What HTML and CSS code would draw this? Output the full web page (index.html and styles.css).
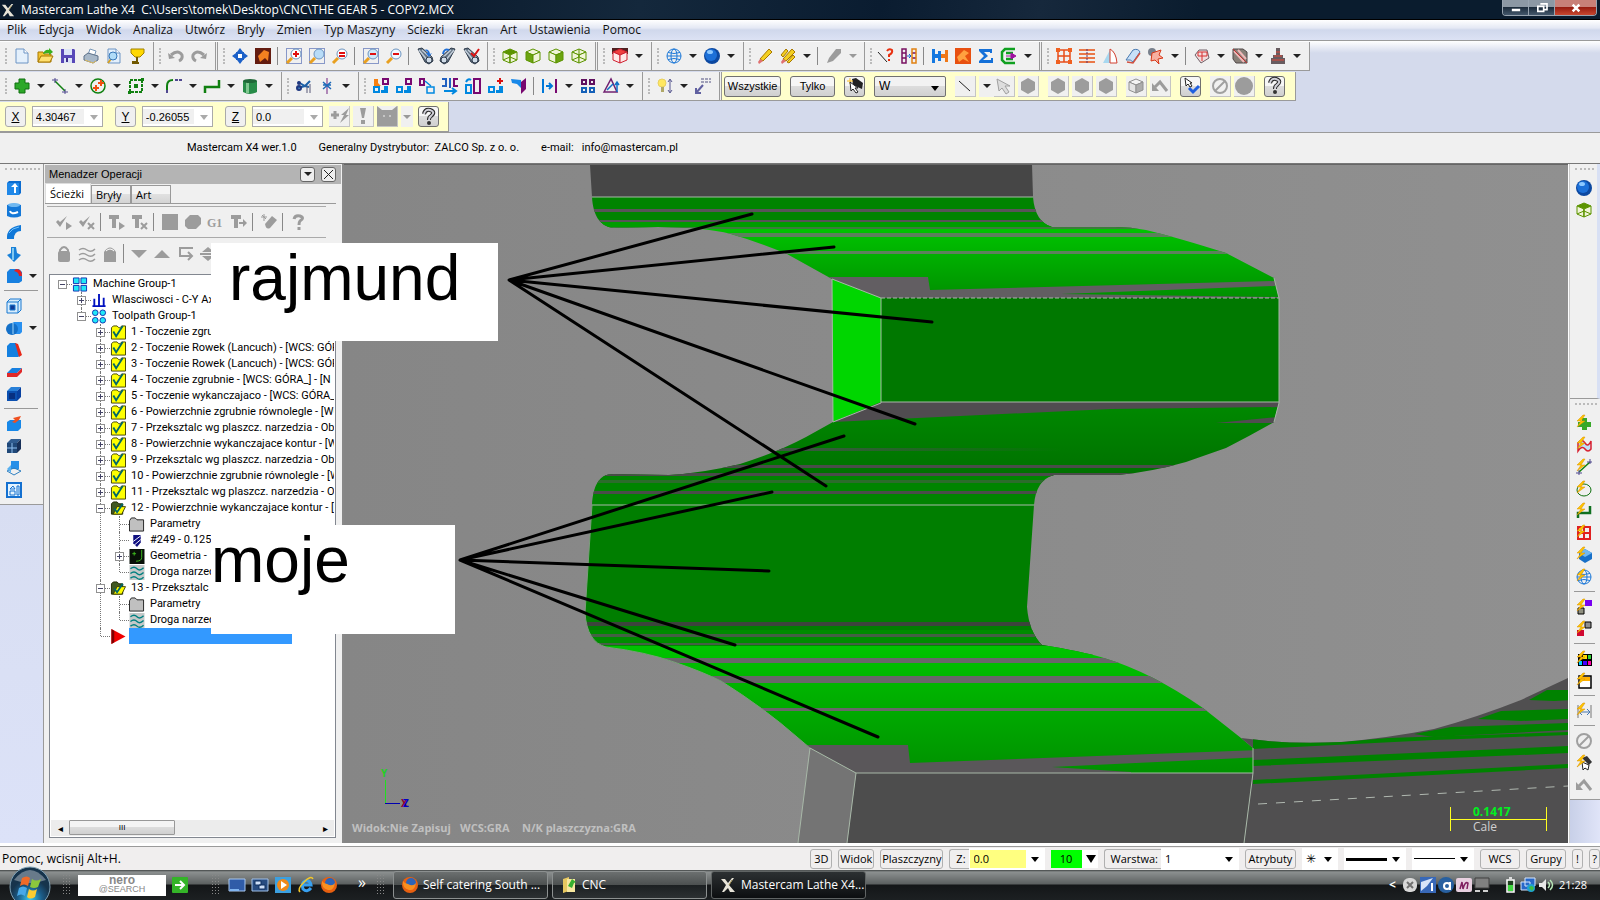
FILE: index.html
```
<!DOCTYPE html>
<html lang="pl">
<head>
  <meta charset="UTF-8" />
  <meta name="viewport" content="width=device-width, initial-scale=1.0"/>
  <title>Mastercam Lathe X4</title>
  <link rel="stylesheet" href="styles.css">
</head>
<body>

  <!-- Title bar -->
  <header class="titlebar">
    <span data-icon="app"></span>
    <h1>Mastercam Lathe X4&nbsp; C:\Users\tomek\Desktop\CNC\THE GEAR 5 - COPY2.MCX</h1>
    <div class="window-buttons">
      <button aria-label="Minimalizuj"><svg viewBox="0 0 16 12"><path d="M3 7h10v3H3z" fill="#fff"/></svg></button>
      <button aria-label="Przywroc"><svg viewBox="0 0 16 12"><path d="M6 1h8v7h-3M3 4h7v6H3z" fill="none" stroke="#fff" stroke-width="2"/></svg></button>
      <button class="close" aria-label="Zamknij"><svg viewBox="0 0 16 12"><path d="M4 2l8 8M12 2l-8 8" stroke="#fff" stroke-width="3"/></svg></button>
    </div>
  </header>

  <nav class="menu">
    <a href="#">Plik</a>
    <a href="#">Edycja</a>
    <a href="#">Widok</a>
    <a href="#">Analiza</a>
    <a href="#">Utwórz</a>
    <a href="#">Bryly</a>
    <a href="#">Zmien</a>
    <a href="#">Typ Maszyny</a>
    <a href="#">Sciezki</a>
    <a href="#">Ekran</a>
    <a href="#">Art</a>
    <a href="#">Ustawienia</a>
    <a href="#">Pomoc</a>
  </nav>

  <!-- Toolbars -->
  <div class="toolbars">
    <div class="toolbar">
      <div class="group" data-icons="new open save print preview trophy"></div>
      <div class="group double" data-icons="undo redo"></div>
      <div class="group" data-icons="pan fit | zoomwin zoombox zoomeq | unzoom zoomout | view1 view2 view3"></div>
      <div class="group double" data-icons="cubeTop cubeLeft cubeRight cubeWire"></div>
      <div class="group" data-icons="cubeRed v"></div>
      <div class="group" data-icons="globe v sphere v"></div>
      <div class="group tight" data-icons="pencil pencils v | pencilOff v-"></div>
      <div class="group double tight" data-icons="ask columns | plug orange sigma green v"></div>
      <div class="group" data-icons="gridRed linesRed fan tube flower v | net v slab v drill v"></div>
    </div>
    <div class="toolbar">
      <div class="group" data-icons="plus v line v circle v rect v fillet v spline v cylinder v"></div>
      <div class="group" data-icons="scissors trim v"></div>
      <div class="group" data-icons="xf1 xf2 xf3 xf4 xf5 xf6 xf7 | xf8 v squares triangle v"></div>
      <div class="group double" data-icons="bulb v dimension"></div>
      <div class="ribbon">
        <button class="push all">Wszystkie</button>
        <button class="push only">Tylko</button>
        <button class="push square" aria-label="Wybor" data-icon="pick"></button>
        <span class="combo mode"><select aria-label="Tryb"><option>W</option></select></span>
        <div class="flat-set" data-icons="thin v arrowOff hexOff"></div>
        <div class="flat-set" data-icons="hexOff hexOff hexOff"></div>
        <div class="flat-set" data-icons="cubeOff backOff"></div>
        <button class="push square" aria-label="Zatwierdz" data-icon="pickOk"></button>
        <div class="flat-set" data-icons="noOff discOff"></div>
        <button class="push square" aria-label="Pomoc" data-icon="help"></button>
      </div>
    </div>
    <div class="toolbar last">
      <div class="ribbon coords">
        <button class="push square" aria-label="X"><u>X</u></button>
        <span class="combo off"><input type="text" aria-label="X" value="4.30467"></span>
        <button class="push square" aria-label="Y"><u>Y</u></button>
        <span class="combo off"><input type="text" aria-label="Y" value="-0.26055"></span>
        <button class="push square" aria-label="Z"><u>Z</u></button>
        <span class="combo off"><input type="text" aria-label="Z" value="0.0"></span>
        <div class="flat-set" data-icons="fastOff bangOff maskOff v-"></div>
        <button class="push square" aria-label="Pomoc" data-icon="help"></button>
      </div>
    </div>
  </div>

  <div class="info">
    <span>Mastercam X4 wer.1.0</span>
    <span>Generalny Dystrybutor:&nbsp; ZALCO Sp. z o. o.</span>
    <span>e-mail:&nbsp;&nbsp; info@mastercam.pl</span>
  </div>

  <!-- Workspace -->
  <main class="workspace">
    <aside class="strip left">
      <div class="strip-tools" data-icons="extrude revolve sweep loft filletSolid v | shell boolean v draft trimSolid solidBlock | solidEdit solidGrid solidArrow layout"></div>
    </aside>

    <section class="manager">
      <div class="manager-head">
        <h2>Menadzer Operacji</h2>
        <button aria-label="Menu"><i class="caret"></i></button>
        <button aria-label="Zamknij"><svg class="cross" viewBox="0 0 9 9"><path d="M0 0l9 9M9 0L0 9" stroke="#222"/></svg></button>
      </div>
      <div class="tabs">
        <button class="tab active">Ścieżki</button>
        <button class="tab">Bryły</button>
        <button class="tab">Art</button>
      </div>
      <div class="manager-tools" data-icons="checkPlay checkX | toolPlay toolX | squareOff blobOff g1 toolGo | brushOff | helpOff"></div>
      <div class="manager-tools plain" data-icons="lockOff wavesOff ghostOff | downOff upOff loopOff splitOff"></div>
      <div class="tree-box">
        <ul class="tree" id="tree"></ul>
        <div class="scroll">
          <button aria-label="W lewo">◂</button>
          <div class="track"><div class="thumb">III</div></div>
          <button aria-label="W prawo">▸</button>
        </div>
      </div>
    </section>

    <section class="viewport">
      <svg viewBox="343 165 1226 678" preserveAspectRatio="xMinYMin slice">
        <defs>
          <linearGradient id="bg" x1="0" x2="1"><stop offset="0" stop-color="#868686"/><stop offset="1" stop-color="#909090"/></linearGradient>
          <linearGradient id="upper" x1="0" y1="0" x2="0" y2="1"><stop offset="0" stop-color="#00c400"/><stop offset="1" stop-color="#009000"/></linearGradient>
          <linearGradient id="lower" x1="0" y1="0" x2="0" y2="1"><stop offset="0" stop-color="#008a00"/><stop offset="1" stop-color="#007000"/></linearGradient>
          <linearGradient id="fade"><stop offset="0" stop-color="#44504a"/><stop offset="1" stop-color="#007a00"/></linearGradient>
          <clipPath id="topTooth"><path d="M591 197C592 214 598 226 612 228L657 227Q702 227 730 234Q760 243 786 254L831 279L880 298H1278L1273 278L1225 253Q1178 238 1145 230Q1130 227 1114 227H1051Q1034 222 1032 197Z"/></clipPath>
          <clipPath id="midTooth"><path d="M880 402H1278L1273 422Q1250 435 1225 448L1185 462Q1150 472 1117 475H1053Q1035 480 1033 505H591C592 486 598 474 612 474L668 475Q702 473 739 464Q775 453 805 437L832 422Z"/></clipPath>
          <clipPath id="lowTooth"><path d="M591 505L584 613Q586 642 605 647Q645 652 673 662Q702 672 720 681Q763 708 796 737L809 748L855 773H1252V748L1240 738L1202 708Q1150 672 1103 658Q1080 651 1041 645Q1028 632 1026 607L1033 505Z"/></clipPath>
          <clipPath id="farTooth"><path d="M1240 738L1267 741Q1300 744 1340 742Q1387 738 1433 729Q1477 717 1520 700L1569 677V843H1243L1252 773V748Z"/></clipPath>
        </defs>
        <rect x="343" y="165" width="1226" height="678" fill="url(#bg)"/>

        <!-- top tooth -->
        <path d="M589 165H1031L1032 197H591Z" fill="#464646"/>
        <g clip-path="url(#topTooth)">
          <path d="M580 197h710v31H580z" fill="#008400"/>
          <path d="M580 222h710v5H580z" fill="#009c00"/>
          <path d="M580 228h710v70H580z" fill="url(#upper)"/>
          <path d="M580 209h710v3H580zM580 220h710v2H580z" fill="#585458"/>
          <path d="M580 227h710v2H580z" fill="#3c7c3c"/>
          <path d="M580 233h710v4H580zM580 251h710v3H580z" fill="#5c805c"/>
          <path d="M820 277H927L929 290L1274 281V286L1060 294L1280 297V300H820Z" fill="#625e62"/>
        </g>
        <path d="M831 279L880 298V403L832 422Z" fill="#00d600"/>
        <path d="M880 298H1278V403H880Z" fill="#007800"/>
        <g clip-path="url(#midTooth)">
          <path d="M580 402h710v75H580z" fill="url(#lower)"/>
          <path d="M580 475h710v30H580z" fill="#008400"/>
          <path d="M832 402H1280V407L1110 409L832 422Z" fill="#504c50"/>
          <path d="M1215 423L1277 417V423Z" fill="#504c50"/>
          <path d="M760 448h300v3H760z" fill="url(#fade)"/>
          <path d="M580 465h710v3H580zM580 473h710v3H580zM580 491h710v3H580z" fill="#4a4c4a"/>
          <path d="M580 480h710v3H580z" fill="#2c6c2c"/>
        </g>
        <g clip-path="url(#lowTooth)">
          <path d="M580 505h710v150H580z" fill="#007e00"/>
          <path d="M580 630h710v16H580z" fill="#008c00"/>
          <path d="M580 646h710v130H580z" fill="url(#upper)"/>
          <path d="M580 622h710v4H580z" fill="#3c443c"/>
          <path d="M580 634h710v3H580zM580 643h710v2H580z" fill="#456045"/>
          <path d="M580 658h710v5H580zM580 676h710v7H580zM580 708h710v3H580z" fill="#696669"/>
          <path d="M800 745H907L909 763L1260 750V757L1051 767L1130 772V776H800Z" fill="#5a575a"/>
        </g>
        <path d="M855 773H1252L1243 843H846Z" fill="#4d4d4d"/>
        <path d="M809 748L855 773L846 843H797Z" fill="#747474"/>

        <!-- next tooth on the right -->
        <g clip-path="url(#farTooth)">
          <path d="M1240 670H1569V843H1240Z" fill="#504f50"/>
          <g fill="#008200">
            <path d="M1252 738L1340 742L1387 738L1569 732V735L1433 740L1252 749Z"/>
            <path d="M1528 700L1546 690H1569V700L1553 701Z"/>
            <path d="M1477 719L1500 711L1569 709V719L1520 721Z"/>
            <path d="M1413 734L1450 727L1569 723V730L1433 737Z"/>
            <path d="M1252 760L1569 746V753L1252 766ZM1252 780L1569 764V768L1252 784Z"/>
          </g>
          <path d="M1257 804L1567 786" stroke="#b0b8b0" stroke-dasharray="9 9"/>
        </g>

        <!-- edges -->
        <g fill="none" stroke="#a8b8a8">
          <path d="M591 197H1032M880 402H1278M591 505H1033M855 773H1252"/>
          <path d="M880 298H1278" stroke-dasharray="4 2"/>
          <path d="M831 279L880 298V403L832 422ZM1273 278L1278 298V403L1273 422"/>
          <path d="M797 843L809 748L855 773L846 843M1252 748V773L1243 843"/>
          <path d="M591 505L584 613Q586 642 605 647Q645 652 673 662Q702 672 720 681Q763 708 796 737L809 748" stroke="#7c9c7c"/>
        </g>

        <g fill="none" stroke="#000" stroke-width="3" stroke-linecap="round">
          <path d="M751 214L508 280L833 247M931 322L508 280L914 424M508 280L825 486"/>
          <path d="M843 436L459 560L771 492M768 571L459 560L734 645M459 560L877 737"/>
        </g>

        <!-- axes, view names and scale -->
        <path d="M384.500 780V803" stroke="#20e020"/>
        <path d="M384 803.500H399" stroke="#0000b0"/>
        <text class="axis" x="380" y="777" fill="#20d020">Y</text>
        <text class="axis" x="400" y="807" fill="#8c0020">X</text>
        <text class="axis" x="402" y="807" fill="#0000c8">Z</text>
        <g class="view-names">
          <text x="351" y="832">Widok:Nie Zapisuj</text>
          <text x="459" y="832">WCS:GRA</text>
          <text x="521" y="832">N/K plaszczyzna:GRA</text>
        </g>
        <path d="M1449.500 807V831M1545.500 807V831M1449 819.500H1546" stroke="#ffff20"/>
        <text class="scale" x="1472" y="816">0.1417</text>
        <text class="scale unit" x="1472" y="831">Cale</text>
      </svg>
    </section>

    <aside class="strip right">
      <div class="strip-tools tall" data-icons="sphere cubeTop"></div>
      <div class="strip-tools" data-icons="qPlus qSurf qLine qCircle qSpline qGrid qCube qGlobe | qViolet qRed | qColors qWindow | qDim | noOff qPick backOff"></div>
    </aside>

    <!-- notes laid over the screen -->
    <div class="note rajmund">rajmund</div>
    <div class="note moje">moje</div>
  </main>

  <!-- Status bar -->
  <div class="status">
    <span class="hint">Pomoc, wcisnij Alt+H.</span>
    <button class="b3d">3D</button>
    <button class="bview">Widok</button>
    <button class="bplane">Plaszczyzny</button>
    <div class="field">
      <label for="z">Z:</label>
      <span class="combo depth"><input type="text" id="z" value="0.0"></span>
    </div>
    <div class="field color">
      <button class="ten">10</button><i class="caret big"></i>
    </div>
    <div class="field">
      <label for="layer">Warstwa:</label>
      <span class="combo layer"><select id="layer"><option>1</option></select></span>
    </div>
    <button class="battr">Atrybuty</button>
    <span class="combo point"><select aria-label="Punkt"><option>✳</option></select></span>
    <span class="combo stroke thick"><select aria-label="Grubosc"><option></option></select></span>
    <span class="combo stroke"><select aria-label="Linia"><option></option></select></span>
    <button class="bwcs">WCS</button>
    <button class="bwcs">Grupy</button>
    <button class="bmark">!</button>
    <button class="bmark">?</button>
  </div>

  <!-- Taskbar -->
  <footer class="taskbar">
    <button class="start" aria-label="Start">
      <svg viewBox="0 0 42 42">
        <defs><radialGradient id="orb" cy="0.8"><stop offset="0" stop-color="#38c8f0"/><stop offset="0.6" stop-color="#1c5c88"/><stop offset="1" stop-color="#17344c"/></radialGradient></defs>
        <circle cx="21" cy="21" r="20" fill="url(#orb)" stroke="#7fa0b4"/>
        <path d="M5 14Q21 -6 37 14Q21 20 5 14Z" fill="#fff" opacity=".35"/>
        <path d="M13 12q5-3 8 0l-2 8q-4-3-8 0z" fill="#f06a28"/>
        <path d="M23 13q4 3 9 0l-3 8q-4 2-8 0z" fill="#8cc83c"/>
        <path d="M10 22q4-3 8 0l-2 8q-4-3-8 0z" fill="#48a8e8"/>
        <path d="M20 23q4 3 8 0l-2 8q-5 3-8 0z" fill="#fccc30"/>
      </svg>
    </button>
    <i class="dots"></i>
    <div class="nero"><b>nero</b><span>@SEARCH</span></div>
    <button class="tb" aria-label="Szukaj" data-icon="go"></button>
    <i class="dots second"></i>
    <div class="quick" data-icons="desktop switch player ie firefox"></div>
    <span class="more">»</span>
    <i class="dots"></i>
    <button class="task"><span data-icon="firefox"></span>Self catering South ...</button>
    <button class="task"><span data-icon="folderTask"></span>CNC</button>
    <button class="task current"><span data-icon="app"></span>Mastercam Lathe X4...</button>
    <div class="tray">
      <span class="less">&lt;</span>
      <div class="tray-icons" data-icons="skype info avast notes screen"></div>
      <div class="tray-icons" data-icons="battery network volume"></div>
      <time>21:28</time>
    </div>
  </footer>

  <script>
    const bolt = '<path d="M7 0L1 6h4L1 12l8-6H5l4-6z" fill="#ffc400" stroke="#d89000" stroke-width=".5"/>';
    const lens = (fill, mark) => `<path d="M1 15l5-5" stroke="#e8a020" stroke-width="3"/><circle cx="10" cy="6" r="5" fill="${fill}" stroke="#6c94c0"/>${mark}`;
    const frame = '<path d="M.5.5h15v15H.5z" fill="none" stroke="#2040a0" stroke-dasharray="1 1"/>';
    const cube = (line, top, left, right) => `<g stroke="${line}" stroke-linejoin="round"><path d="M1 4l7-3 7 3-7 3z" fill="${top}"/><path d="M1 4l7 3v8l-7-3z" fill="${left}"/><path d="M15 4l-7 3v8l7-3z" fill="${right}"/></g>`;
    const block = (top, side, front) => `<path d="M1 5l4-4h10l-4 4z" fill="${top}"/><path d="M11 5l4-4v10l-4 4z" fill="${side}"/><path d="M1 5h10v10H1z" fill="${front}"/>`;
    const scope = extra => `<path d="M1 1l4-1 10 9 1 4-4 3-4-2z" fill="#607080" stroke="#303c4c"/><path d="M2 2l9 11M5 2l9 8" stroke="#c0ccd8" stroke-width="1.500"/><circle cx="12" cy="12" r="3" fill="#d0dce8" stroke="#303c4c"/>${extra}`;
    const globe = '<g fill="none" stroke="#1c78d8"><circle cx="8" cy="8" r="7"/><ellipse cx="8" cy="8" rx="3" ry="7"/><path d="M1 8h14M2 4.500q6 2 12 0M2 11.500q6-2 12 0"/></g>';
    const page = '<path d="M2 1h8l4 4v10H2z" fill="#e4f0fc" stroke="#6c94c4"/><path d="M10 1v4h4" fill="#fff" stroke="#6c94c4"/>';
    const parts = '<path d="M1 9h5v5H1z" fill="none" stroke="#0088e0" stroke-width="2"/><path d="M11 8h4v7H8v-3h3z" fill="#0088e0"/>';
    const disc = '<path d="M8 0l7 4v8l-7 4-7-4V4z" fill="#9c9c9c"/>';
    const check = '<path d="M0 8l4 5 7-11-7 6-2-2z" fill="#9c9c9c"/>';
    const tee = '<path d="M0 1h10v4H7v9H3V5H0z" fill="#9c9c9c"/>';
    const folder = '<path d="M1 15V3l2-2h4l2 2h1l2-2h4v14z" fill="#ff0" stroke="#404000"/>';
    const pencil = c => `<path d="M3 11L12 1l3 3-9 9z" fill="${c}" stroke="#a87800"/><path d="M3 11l3 2-4 3-1-2z" fill="#e07070"/>`;
    const cursor = '<path d="M3 4l1 9 2-2 3 4 2-1-3-4h3z" fill="#fff" stroke="#222"/>';

    const icons = {
      app: '<path d="M1 2h4l3 4 4-5h2L9 8l6 7h-5l-2-4-4 4H2l4-7z" fill="#e8e4d8"/><path d="M9 8l3-5" stroke="#9c8c50"/>',
      new: page,
      open: '<path d="M1 14V4h5l1 2h7v8z" fill="#f4c430" stroke="#a87800"/><path d="M1 14l3-6h12l-3 6z" fill="#ffe070" stroke="#a87800"/><path d="M6 6q2-5 6-4V0l4 4-4 3V5q-3 0-6 1z" fill="#38b020"/>',
      save: '<path d="M1 1h13l1 1v13H1z" fill="#5848b8"/><path d="M4 1h8v6H4zM4 10h8v5H4z" fill="#dce4f8"/><path d="M6 10h2v4H6z" fill="#40308c"/>',
      print: '<path d="M5 7l2-6 6 2-2 6z" fill="#fff" stroke="#7898b8"/><path d="M1 8l4-3 10 3v4l-5 3-9-3z" fill="#a8b8c8" stroke="#5c7088"/><path d="M2 12l8 3 3-2" stroke="#e4c060" fill="none"/>',
      preview: page + '<path d="M2 15l3-4" stroke="#d8a020" stroke-width="2"/><circle cx="7" cy="8" r="4" fill="#b0dcf8" stroke="#3878b8"/>',
      trophy: '<path d="M2 1h13v4l-4 4H6L2 5z" fill="#ffd800" stroke="#a08000"/><path d="M8 9v5H4v1h6" stroke="#705800" fill="none" stroke-width="2"/>',
      undo: '<path d="M3 7q7-6 11 0 1 4-3 6" fill="none" stroke="#9c9c9c" stroke-width="3"/><path d="M0 5l1 6 6-1z" fill="#9c9c9c"/>',
      redo: '<path d="M13 7q-7-6-11 0-1 4 3 6" fill="none" stroke="#9c9c9c" stroke-width="3"/><path d="M16 5l-1 6-6-1z" fill="#9c9c9c"/>',
      pan: '<path d="M8 0l3 4H9v3h3V5l4 3-4 3V9H9v3h2l-3 4-3-4h2V9H4v2L0 8l4-3v2h3V4H5z" fill="#1c60c8"/><path d="M5 5h6v6H5z" fill="#fff" stroke="#1c60c8" stroke-width="2"/>',
      fit: '<path d="M0 0h16v16H0z" fill="#641c10"/><path d="M3 8l6-6 5 2-1 9-3-3-5 4z" fill="#f48020"/>',
      zoomwin: frame + lens('#fff', '<path d="M7 6h6M10 3v6" stroke="#e01010" stroke-width="2"/>'),
      zoombox: frame + lens('#b8dcf8', ''),
      zoomeq: lens('#fff', '<path d="M7 5h6M7 8h6" stroke="#e01010" stroke-width="2"/>'),
      unzoom: frame + lens('#d0e8f8', '<path d="M7 6h6" stroke="#e01010" stroke-width="2"/>'),
      zoomout: lens('#f0f8ff', '<path d="M7 6h6" stroke="#e01010" stroke-width="2"/>'),
      view1: scope('<path d="M7 2q5-2 6 4l2-1-3 4-3-4h2q0-2-4-3z" fill="#2070d8"/>'),
      view2: '<g transform="matrix(-1 0 0 1 16 0)">' + scope('<path d="M7 2q5-2 6 4" stroke="#2070d8" fill="none" stroke-width="2"/>') + '</g>',
      view3: scope('<path d="M8 5l3 3 5-7" stroke="#d81010" fill="none" stroke-width="2"/>'),
      cubeTop: cube('#5c9400', '#5c9400', '#f0f4d8', '#f0f4d8') + '<path d="M1 12l7-3 7 3M8 7v8" stroke="#5c9400" fill="none"/>',
      cubeLeft: cube('#5c9400', '#f0f4d8', '#6ca410', '#f0f4d8'),
      cubeRight: cube('#5c9400', '#f0f4d8', '#f0f4d8', '#6ca410'),
      cubeWire: cube('#5c9400', '#f0f4d8', '#f0f4d8', '#f0f4d8') + '<path d="M1 12l7-3 7 3M8 1v8" stroke="#5c9400" fill="none"/>',
      cubeRed: '<path d="M0 0h16v6H0z" fill="#502020"/>' + cube('#d02030', '#f04040', '#ffe8e8', '#ffe8e8'),
      globe: globe,
      sphere: '<circle cx="8" cy="8" r="8" fill="#0c48a0"/><circle cx="7" cy="7" r="6" fill="#1c70d8"/><ellipse cx="6" cy="4" rx="3" ry="2" fill="#8cc8ff"/>',
      pencil: pencil('#f4d020'),
      pencils: '<path d="M1 7l5-6 2 2-5 6zM7 14l6-7 2 2-6 6z" fill="#f4d020" stroke="#a87800"/>' + pencil('#f4d020'),
      pencilOff: '<path d="M1 15l2-5 7-9h5v4l-8 8z" fill="#9c9c9c"/>',
      ask: '<path d="M0 4l9 10" stroke="#222"/><path d="M9 3q2-3 5-1 1 3-3 5v2M11 11v2" stroke="#e83010" stroke-width="2" fill="none"/>',
      columns: '<path d="M1 1h4v14H1zM1 5h4M1 10h4M11 5h4M11 10h4" fill="none" stroke="#781060" stroke-width="1.500"/><path d="M11 1h4v14h-4z" fill="none" stroke="#e08010" stroke-width="1.500"/><path d="M6 8h4M8 6l2 2-2 2" stroke="#1060d0" fill="none"/>',
      plug: '<path d="M0 1h3v5h3V3h3v10H6v-3H3v5H0z" fill="#1478e0"/><path d="M9 6h4V2h3v12h-3v-4H9z" fill="#f07818"/>',
      orange: '<path d="M0 0h16v16H0z" fill="#e85010"/><path d="M2 9l7-7 5 3-4 3 4 6-6-3-4 3z" fill="#ffa040"/>',
      sigma: '<path d="M1 1h13v4h-2V4H6l4 4-5 4h8v-2h2v5H1v-2l5-5-5-5z" fill="#1470d8"/>',
      green: '<path d="M14 1H4L1 4v8l3 3h10M5 5h7M5 11h7" fill="none" stroke="#10a020" stroke-width="2.500" /><path d="M5 8h6M10 5l5 3-5 3z" fill="#a010a0" stroke="#a010a0"/>',
      gridRed: '<path d="M2 2h12v12H2zM8 2v12M2 8h12" fill="none" stroke="#e84c18" stroke-width="1.500"/><path d="M0 0h4v4H0zM12 0h4v4h-4zM0 12h4v4H0zM12 12h4v4h-4z" fill="#f06020"/>',
      linesRed: '<path d="M0 2h16M0 6h16M0 10h16M0 14h16" stroke="#e85010" stroke-width="1.500"/><path d="M8 1v14" stroke="#603068" stroke-dasharray="2 1"/>',
      fan: '<path d="M1 15L8 2v13z" fill="#a8d8f0"/><path d="M8 1q6 3 7 14H8z" fill="#fff" stroke="#d04030"/>',
      tube: '<path d="M1 12L8 2q5-2 7 2l-7 10q-2-3-7-2z" fill="#c8e0f8" stroke="#4878b0"/><path d="M2 14l6 1 7-10" fill="none" stroke="#d05040" stroke-width="1.500"/>',
      flower: '<circle cx="4" cy="4" r="4" fill="#78808c"/><path d="M4 5l9-3-2 5 4 3-5 1 1 5-4-4-4 1z" fill="#f8b0a0" stroke="#d83818"/>',
      net: '<path d="M1 7l4-5h8l2 8-8 5z" fill="#f0dcdc" stroke="#706068"/><path d="M4 4h9v4H4zM8 4v9" fill="none" stroke="#d83030"/>',
      slab: '<path d="M1 1h10l4 3v11H4l-3-4z" fill="#888078" stroke="#504848"/><path d="M2 3l10 11M6 2l8 9" stroke="#f0b8b8" stroke-width="2"/><path d="M1 1l14 14" stroke="#c03030"/>',
      drill: '<path d="M6 0h4v7h3v3h2v6H1v-6h2V7h3z" fill="#685c60"/><path d="M6 4h4M4 8h8M2 12h12" stroke="#e04838"/>',
      plus: '<path d="M5 1h6v4h4v6h-4v4H5v-4H1V5h4z" fill="#2ca828" stroke="#107010"/>',
      line: '<path d="M3 3l10 10" stroke="#108010" stroke-width="1.500"/><path d="M0 2h6M3 0v5M10 14h6M13 11v5" stroke="#504890"/>',
      circle: '<circle cx="8" cy="8" r="7" fill="none" stroke="#108010" stroke-width="1.500"/><path d="M3 10h6M6 7v6M8 5h6M11 2v6" stroke="#f05010" stroke-width="2"/>',
      rect: '<path d="M2 2h12v12H2z" fill="none" stroke="#108010" stroke-width="2" stroke-dasharray="3 1"/><path d="M6 6h4v4H6zM13 0h3v3h-3zM0 13h3v3H0z" fill="#108010"/>',
      fillet: '<path d="M1 15V8q0-6 6-6" fill="none" stroke="#108010" stroke-width="2"/><path d="M9 2h7M1 12v4" stroke="#504890" stroke-width="2" stroke-dasharray="3 1"/>',
      spline: '<path d="M1 15V9h14V2" fill="none" stroke="#108010" stroke-width="2.500"/>',
      cylinder: '<path d="M1 3v11q7 4 14 0V3z" fill="#288c48"/><path d="M4 4h3v11H4z" fill="#80c890"/><ellipse cx="8" cy="3" rx="7" ry="2" fill="#206838"/>',
      scissors: '<path d="M2 4l7 4 5-5M2 10l7-2 4 1" stroke="#1c60a8" fill="none" stroke-width="2"/><circle cx="3" cy="10" r="2" fill="none" stroke="#203880" stroke-width="2"/><circle cx="3" cy="5" r="2" fill="#203880"/><path d="M11 8v7M14 6v9" stroke="#585878"/>',
      trim: '<path d="M8 0v16" stroke="#702080"/><path d="M4 4l8 7M12 4l-8 7M4 7h8" stroke="#1c68b8" stroke-width="1.500"/>',
      xf1: '<path d="M1 1h4v4l3 3H1z" fill="#f88010"/><path d="M10 1h5v5h-5z" fill="none" stroke="#780870" stroke-width="2"/>' + parts,
      xf2: '<path d="M10 1h5v5h-5z" fill="none" stroke="#780870" stroke-width="2"/>' + parts,
      xf3: '<path d="M1 1h4v6H1z" fill="none" stroke="#780870" stroke-width="2"/><path d="M6 3l6 5M8 9h7v6H8z" fill="none" stroke="#0088e0" stroke-width="1.500"/>',
      xf4: '<path d="M0 1h4v7H0M8 0v10" fill="none" stroke="#2060c0" stroke-width="2"/><path d="M16 1h-4v7h4" fill="none" stroke="#780870" stroke-width="2"/><path d="M2 13h11M10 10l4 3-4 3" stroke="#0088e0" fill="none" stroke-width="2"/>',
      xf5: '<path d="M1 7h5v8H1zM1 4q2-4 5-2" fill="none" stroke="#0088e0" stroke-width="2"/><path d="M9 1h6v14H9z" fill="none" stroke="#780870" stroke-width="2"/>',
      xf6: '<path d="M12 0v6M9 3h6" stroke="#d81010" stroke-width="2"/>' + parts,
      xf7: '<path d="M0 1l10 1v8L6 6 1 5z" fill="#1888e8"/><path d="M10 4l5-4v11l-5 5z" fill="#780870"/>',
      xf8: '<path d="M1 1v14M4 8h6M7 5l3 3-3 3" fill="none" stroke="#0078d8" stroke-width="2"/><path d="M14 1v14" stroke="#780870" stroke-width="2"/>',
      squares: '<path d="M2 2h4v4H2zM10 2h4v4h-4z" fill="none" stroke="#601060" stroke-width="2"/><path d="M2 10h4v4H2zM10 10h4v4h-4z" fill="none" stroke="#1460b8" stroke-width="2"/>',
      triangle: '<path d="M1 14L8 1l6 13z" fill="none" stroke="#702070" stroke-width="1.500"/><path d="M4 12l6-6M14 14V5M12 7l2-3 2 3" fill="none" stroke="#1070c8" stroke-width="1.500"/>',
      bulb: '<circle cx="5" cy="5" r="4" fill="#ffe860" stroke="#e8d060"/><path d="M4 9h3v5H4z" fill="#b0a868"/><path d="M13 2v12M11 4l2-3 2 3M11 12l2 3 2-3" stroke="#585890" fill="none"/>',
      dimension: '<path d="M1 10v5h5M1 15L8 7" fill="none" stroke="#6060a0" stroke-width="2"/><path d="M6 1h10M6 4h10" stroke="#505080" stroke-dasharray="3 1"/>',
      thin: '<path d="M2 3l11 10" stroke="#222"/>',
      pick: '<path d="M5 1l4-1 7 5-1 6-9-4z" fill="#222"/><path d="M3 0v6M0 3h6" stroke="#ffc020"/>' + cursor,
      pickOk: '<path d="M6 10l4 4 6-6" fill="none" stroke="#2060e0" stroke-width="3"/><path d="M2 0l1 8 2-2 2 3 2-1-2-3h2z" fill="#fff" stroke="#222"/>',
      arrowOff: '<path d="M1 1l2 12 3-3 4 6 3-2-4-6h5z" fill="#ddd" stroke="#a0a0a0"/>',
      hexOff: disc,
      discOff: '<circle cx="8" cy="8" r="9" fill="#9c9c9c"/>',
      cubeOff: cube('#909090', '#f4f4f4', '#e4e4e4', '#acacac'),
      backOff: '<path d="M3 9l5-5 7 9" fill="none" stroke="#9c9c9c" stroke-width="3"/><path d="M0 5v8h7z" fill="#9c9c9c"/>',
      noOff: '<circle cx="8" cy="8" r="7" fill="none" stroke="#a0a0a0" stroke-width="2"/><path d="M3 13L13 3" stroke="#a0a0a0" stroke-width="2"/>',
      help: '<path d="M3 5q1-5 6-4 6 2 1 6-2 1-2 4" fill="none" stroke="#282828" stroke-width="4"/><path d="M3 5q1-5 6-4 6 2 1 6-2 1-2 4" fill="none" stroke="#d0d0d8" stroke-width="2"/><circle cx="8" cy="14" r="2" fill="#333"/>',
      helpOff: '<path d="M3 5q1-4 6-3 5 2 0 5-1 1-1 4M8 13v3" fill="none" stroke="#9c9c9c" stroke-width="3"/>',
      fastOff: '<path d="M4 3v8M0 7h8" stroke="#9c9c9c" stroke-width="3"/><path d="M18 0l-8 7h3l-4 8 9-8h-3z" fill="#9c9c9c"/>',
      bangOff: '<path d="M5 0h6L9 10H7zM6 12h4v4H6z" fill="#9c9c9c"/>',
      maskOff: '<path d="M-2-2l5 4h10l5-4v20H-2z" fill="#9c9c9c"/><path d="M4 8h2M10 8h2" stroke="#eee"/>',
      extrude: '<path d="M1 3l2-2h12v12l-2 2H1z" fill="#0c6cd0"/><path d="M1 3h12v12H1z" fill="#2088e8"/><path d="M8 13V7H5l4-4 3 4h-2v6z" fill="#fff"/>',
      revolve: '<path d="M1 3v11q7 3 14 0V3q-7-3-14 0z" fill="#1478d8"/><ellipse cx="8" cy="3" rx="6" ry="2" fill="#70b8f0"/><path d="M4 9q1 4 8 1" fill="none" stroke="#fff" stroke-width="2"/>',
      sweep: '<path d="M1 15Q0 3 15 1v6Q8 7 8 15z" fill="#1078d8"/><path d="M3 9Q6 4 13 3" stroke="#70c0f8" fill="none"/>',
      loft: '<path d="M5 1h5l1 6 4 2-7 7-7-7 4-2z" fill="#1880d8"/><path d="M7 2v12" stroke="#80c8f0" stroke-width="2"/>',
      filletSolid: '<path d="M1 4l3-3h9l3 3v9l-3 2H1z" fill="#1880e0"/><path d="M10 1q6 0 6 7h-3q0-4-5-5z" fill="#e82020"/>',
      shell: '<path d="M1 4h11v11H1zM1 4l3-3h11v11l-3 3M12 4l3-3" fill="#d8ecfc" stroke="#1878d0"/><path d="M4 7h5v5H4z" fill="#103c98" stroke="#1878d0"/>',
      boolean: '<path d="M7 2h9v10l-2 2H7z" fill="#2890f0"/><circle cx="6" cy="9" r="6" fill="#1470c8"/><path d="M7 2v12" stroke="#a0d4f8"/>',
      draft: '<path d="M1 4l3-3h6l5 12-3 2H1z" fill="#1480e0"/><path d="M9 1l3 1 4 11-3 2z" fill="#e82818"/>',
      trimSolid: '<path d="M1 9l5-5h10l-5 5z" fill="#1880e0"/><path d="M1 9h10l5-5v4l-5 5H1z" fill="#e02828"/>',
      solidBlock: block('#2880d8', '#0840a0', '#0c50b0') + '<path d="M3 7h6v6H3z" fill="#083080"/>',
      solidEdit: '<path d="M1 6l3-2h11v8l-3 3H1z" fill="#1888e8"/><path d="M6 6l3-2-2-2 8-2-2 4-4 3z" fill="#f05020"/>',
      solidGrid: block('#305c90', '#183058', '#204878') + '<path d="M1 10h10M6 5v10" stroke="#90c0f0"/>',
      solidArrow: '<path d="M5 1h8v8H5z" fill="#2890e8"/><path d="M1 11l7-3 7 3-7 4z" fill="none" stroke="#3080c0"/><path d="M1 9l4-4v8z" fill="#58b0f0"/>',
      layout: '<path d="M1 1h14v14H1z" fill="#e4f4ff" stroke="#1470d0" stroke-width="2"/><path d="M4 7l3-3 2 3zM4 9h5v4H4zM11 4h2v9h-2z" fill="none" stroke="#1470d0"/>',
      qPlus: '<path d="M6 3h5v4h4v5h-4v3H6v-3H2V7h4z" fill="#38a828"/>' + bolt,
      qSurf: '<path d="M2 6q4-5 7 0t6-2v8q-3 4-6 0t-7 2z" fill="#c0e0f8" stroke="#d82030" stroke-width="1.500"/>' + bolt,
      qLine: '<path d="M3 13L14 3" stroke="#108010" stroke-width="1.500"/><path d="M0 14h6M3 11v5M11 3h5M14 0v5" stroke="#504890"/>' + bolt,
      qCircle: '<ellipse cx="8" cy="9" rx="7" ry="6" fill="none" stroke="#107010"/>' + bolt,
      qSpline: '<path d="M2 15v-5h12V3" fill="none" stroke="#107020" stroke-width="2.500"/>' + bolt,
      qGrid: '<path d="M2 2h12v12H2zM8 2v12M2 8h12" fill="none" stroke="#e02020" stroke-width="2"/>' + bolt,
      qCube: '<path d="M9 2l7 4v6l-7 4-6-4V6z" fill="#1870c8"/><path d="M9 2l7 4-7 4-6-4z" fill="#70b8f0"/>' + bolt,
      qGlobe: globe + bolt,
      qViolet: '<path d="M9 1h7v6H9z" fill="#7800f0"/><path d="M2 9h6v6H2z" fill="#909080" stroke="#000"/>' + bolt,
      qRed: '<path d="M9 1h6v6H9z" fill="#909090" stroke="#000"/><path d="M1 9h7v6H1z" fill="#d00830"/>' + bolt,
      qColors: '<path d="M2 3h14v12H2z" fill="#000"/><path d="M3 10h3v4H3z" fill="#0cf"/><path d="M7 4h4v4H7z" fill="#fd0"/><path d="M12 4h3v4h-3z" fill="#3c3"/><path d="M7 10h4v4H7z" fill="#40f"/><path d="M12 10h3v4h-3z" fill="#f0a"/>' + bolt,
      qWindow: '<path d="M3 3h12v12H3z" fill="#fff" stroke="#000" stroke-width="1.500"/><path d="M4 4h10v4H4z" fill="#ffb000"/>' + bolt,
      qDim: '<path d="M2 2v13M15 2v13" stroke="#777"/><path d="M4 9h9M6 6L3 9l3 3M11 6l3 3-3 3" fill="none" stroke="#4878b0"/>' + bolt,
      qPick: '<path d="M6 3l5-2 5 6-3 3z" fill="#333"/><path d="M6 7l1 8 2-2 3 2 1-5z" fill="#fff" stroke="#222"/>' + bolt,
      checkPlay: check + '<path d="M10 8l6 4-6 4z" fill="#9c9c9c"/>',
      checkX: check + '<path d="M9 9l6 6M15 9l-6 6" stroke="#9c9c9c" stroke-width="2"/>',
      toolPlay: tee + '<path d="M10 8l6 4-6 4z" fill="#9c9c9c"/>',
      toolX: tee + '<path d="M9 9l6 6M15 9l-6 6" stroke="#9c9c9c" stroke-width="2"/>',
      toolGo: tee + '<path d="M8 8h4V5l4 4-4 4v-3H8z" fill="#9c9c9c"/>',
      squareOff: '<path d="M0 0h16v16H0z" fill="#9c9c9c"/>',
      blobOff: '<path d="M5 1h8l3 3v6l-5 5H3l-3-3V6z" fill="#9c9c9c"/>',
      g1: '<text x="-1" y="13" class="g1">G1</text>',
      brushOff: '<path d="M4 10l7-8 5 4-7 8q-4 2-5-4z" fill="#9c9c9c"/><path d="M3 0v7M0 3h6M1 1l4 4" stroke="#9c9c9c"/>',
      lockOff: '<path d="M4 7V4q4-6 8 0v3" fill="none" stroke="#9c9c9c" stroke-width="2"/><rect x="2" y="5" width="12" height="11" rx="2" fill="#9c9c9c"/>',
      wavesOff: '<path d="M0 4q4-3 8 0t8-1M0 9q4-3 8 0t8-1M0 14q4-3 8 0t8-1" fill="none" stroke="#9c9c9c" stroke-width="1.500"/>',
      ghostOff: '<path d="M2 16V6q6-9 12 0v10z" fill="#9c9c9c"/><path d="M4 5q4-4 8 0" stroke="#fff" fill="none"/>',
      downOff: '<path d="M0 4h16l-8 8z" fill="#9c9c9c"/>',
      upOff: '<path d="M0 12h16L8 4z" fill="#9c9c9c"/>',
      loopOff: '<path d="M16 2H3v8h11M11 6l4 4-4 4" fill="none" stroke="#9c9c9c" stroke-width="2"/>',
      splitOff: '<path d="M2 6l6-5 6 5zM2 10l6 5 6-5zM0 7h16v2H0z" fill="#9c9c9c"/>',
      group: '<path d="M1 1h6v6H1zM9 1h6v6H9zM1 9h6v6H1zM9 9h6v6H9z" fill="#20e8f8" stroke="#1030b0"/>',
      rings: '<g fill="#20e8f8" stroke="#1030b0"><circle cx="4" cy="4" r="3"/><circle cx="12" cy="4" r="3"/><circle cx="4" cy="12" r="3"/><circle cx="12" cy="12" r="3"/></g>',
      props: '<path d="M1 14h14M3 6v8M8 1v13M13 5v9" stroke="#0010c0" stroke-width="2"/>',
      op: folder + '<path d="M3 7l3 5 7-11" fill="none" stroke="#006868" stroke-width="2"/>',
      opOpen: '<path d="M1 14V3l2-2h4l2 2h4v11z" fill="#405820" stroke="#202800"/><path d="M3 14l4-8h9l-4 8z" fill="#ff0" stroke="#404000"/><path d="M4 8l3 4 6-9" fill="none" stroke="#006868" stroke-width="2"/>',
      params: '<path d="M0 15V4l2-3h4l2 2h7v12z" fill="#c0c0c0" stroke="#202020"/>',
      tool: '<path d="M4 2h8v8l-4 5-4-4z" fill="#101080"/><path d="M4 9l8-6M5 13l7-6" stroke="#fff"/>',
      geometry: '<path d="M0 0h16v16H0z" fill="#081008"/><path d="M3 5h4M5 3v4M13 1v8q0 4-6 4" stroke="#40c020" fill="none"/>',
      toolpath: '<path d="M0 0h16v16H0z" fill="#c4c8c8"/><path d="M1 4q4-3 7 0t7-1M1 9q4-3 7 0t7-1M1 14q4-3 7 0t7-1" fill="none" stroke="#008080" stroke-width="1.500"/>',
      insert: '<path d="M1 0l15 8-15 8z" fill="#f00000"/><path d="M1 0l3 2v12l-3 2z" fill="#800000"/>',
      go: '<rect width="16" height="16" rx="1" fill="#34b428"/><path d="M3 8h8M8 4l4 4-4 4" fill="none" stroke="#fff" stroke-width="2"/>',
      desktop: '<path d="M0 2h16v12H0z" fill="#305ca8" stroke="#a8c8f0"/><path d="M1 12h9v2H1z" fill="#80b4f0"/>',
      switch: '<path d="M0 2h16v12H0z" fill="#284c80" stroke="#a0c0e8"/><path d="M3 4h6v4H3zM7 8h6v4H7z" fill="#cfe0f8" stroke="#103060"/>',
      player: '<path d="M0 0h16v16H0z" fill="#3ca0e0"/><circle cx="8" cy="8" r="6" fill="#f08818"/><path d="M6 4l6 4-6 4z" fill="#fff"/>',
      ie: '<path d="M13 11Q9 16 5 12 3 6 7 4q5-1 6 4H5" fill="none" stroke="#38a0f0" stroke-width="3"/><path d="M2 15Q-1 12 6 5t9-3" fill="none" stroke="#f4c828" stroke-width="1.500"/>',
      firefox: '<circle cx="8" cy="8" r="8" fill="#e86010"/><circle cx="9" cy="6" r="5" fill="#2c64b8"/><path d="M1 4q2 3 5 3 5 3 8-1-1 8-7 7Q0 11 1 4z" fill="#f89020"/>',
      folderTask: '<path d="M2 2l6-2v14l-6 2z" fill="#e8c860"/><path d="M6 2h8v13H6z" fill="#f8e8a0"/><path d="M7 9l4-7 4 3-2 1-2 5z" fill="#38b030"/>',
      skype: '<rect x="1" y="1" width="14" height="14" rx="6" fill="#d8d8d8"/><path d="M5 5l6 6M11 5l-6 6" stroke="#707070" stroke-width="2"/>',
      info: '<path d="M0 0h16v16H0z" fill="#3868b8"/><path d="M1 5l12-4-6 8-6 5z" fill="#d8e4f8"/><path d="M12 6v8" stroke="#fff" stroke-width="2"/>',
      avast: '<circle cx="8" cy="8" r="8" fill="#2860a0"/><circle cx="9" cy="9" r="3" fill="none" stroke="#fff" stroke-width="2"/><path d="M12 5v8" stroke="#fff" stroke-width="2"/>',
      notes: '<rect y="1" width="16" height="14" rx="2" fill="#e8d0e0"/><path d="M4 12l2-7 1 7q2-8 5-6l-1 6" fill="none" stroke="#802060" stroke-width="1.500"/>',
      screen: '<path d="M1 1h14v10H1z" fill="#808080" stroke="#404040"/><path d="M1 14h5M9 14h5" stroke="#d0d0d0" stroke-width="2"/>',
      battery: '<path d="M5 3h7v12H5zM7 1h3" fill="#204020" stroke="#fff" stroke-width="1.500"/><path d="M6 8h5v6H6z" fill="#40d840"/>',
      network: '<path d="M5 1h10v8H5zM1 5h9v8H1z" fill="#2868c8" stroke="#d8e8ff"/><circle cx="11" cy="11" r="4" fill="#20a0d0"/><path d="M9 11q2-4 5 0l-2 3z" fill="#40c040"/>',
      volume: '<path d="M1 6h3l4-4v12l-4-4H1z" fill="#e8e8e8"/><path d="M10 5q3 3 0 6M12 3q5 5 0 10" fill="none" stroke="#b8e8b8" stroke-width="1.500"/>'
    };

    const svg = name => `<svg class="icon" viewBox="0 0 16 16" aria-hidden="true">${icons[name]}</svg>`;

    document.querySelectorAll('[data-icon]').forEach(el => {
      el.innerHTML = svg(el.dataset.icon);
    });

    document.querySelectorAll('[data-icons]').forEach(el => {
      el.innerHTML = el.dataset.icons.split(' ').map(name => {
        if (name === '|') return '<i class="sep"></i>';
        if (name === 'v') return '<button class="drop" aria-label="Rozwin"><i class="caret"></i></button>';
        if (name === 'v-') return '<button class="drop" aria-label="Rozwin" disabled><i class="caret gray"></i></button>';
        return `<button class="tb" aria-label="${name}">${svg(name)}</button>`;
      }).join('');
    });

    // [icon, label, children, collapsed]
    const params = ['params', 'Parametry'];
    const path = ['toolpath', 'Droga narzedzia'];
    const operations = [
      ['op', '1 - Toczenie zgrubnie', 0, 1],
      ['op', '2 - Toczenie Rowek (Lancuch) - [WCS: GÓRA_]', 0, 1],
      ['op', '3 - Toczenie Rowek (Lancuch) - [WCS: GÓRA_]', 0, 1],
      ['op', '4 - Toczenie zgrubnie - [WCS: GÓRA_] - [N', 0, 1],
      ['op', '5 - Toczenie wykanczajaco - [WCS: GÓRA_]', 0, 1],
      ['op', '6 - Powierzchnie zgrubnie równolegle - [WCS', 0, 1],
      ['op', '7 - Przeksztalc wg plaszcz. narzedzia - Obrot', 0, 1],
      ['op', '8 - Powierzchnie wykanczajace kontur - [WCS', 0, 1],
      ['op', '9 - Przeksztalc wg plaszcz. narzedzia - Obrot', 0, 1],
      ['op', '10 - Powierzchnie zgrubnie równolegle - [WCS', 0, 1],
      ['op', '11 - Przeksztalc wg plaszcz. narzedzia - Obrot', 0, 1],
      ['opOpen', '12 - Powierzchnie wykanczajace kontur - [WCS', [params, ['tool', '#249 - 0.1250'], ['geometry', 'Geometria -', 0, 1], path]],
      ['opOpen', '13 - Przeksztalc wg', [params, path]],
      ['insert', '']
    ];
    const tree = [['group', 'Machine Group-1', [
      ['props', 'Wlasciwosci - C-Y Axis', 0, 1],
      ['rings', 'Toolpath Group-1', operations]
    ]]];

    function renderNode([icon, label, children, collapsed]) {
      const sign = collapsed ? '<b class="sign plus"></b>' : children ? '<b class="sign"></b>' : '';
      const text = label ? `<span>${label}</span>` : '<span class="selected"></span>';
      const sub = children ? `<ul>${children.map(renderNode).join('')}</ul>` : '';
      return `<li><div class="row"><i class="branch">${sign}</i>${svg(icon)}${text}</div>${sub}</li>`;
    }

    document.getElementById('tree').innerHTML = tree.map(renderNode).join('');
  </script>
</body>
</html>
```
FILE: styles.css
```
:root {
  --face: #f0f0f0;
  --lavender: #d4daec;
  --ribbon: #ffffcc;
  --line: #9a9a9a;
  --ui: "Open Sans", "Noto Sans", sans-serif;
  --small: "Liberation Sans", Arial, sans-serif;
  --narrow: Roboto, "Liberation Sans", sans-serif;
}

* {
  box-sizing: border-box;
}

html, body {
  margin: 0;
  height: 100%;
  overflow: hidden;
}

body {
  display: flex;
  flex-direction: column;
  background: var(--face);
  color: #000;
  font: 12px/16px var(--ui);
}

h1, h2, ul {
  margin: 0;
  padding: 0;
  font: inherit;
}

button, input, select {
  margin: 0;
  padding: 0;
  border: 0;
  background: none;
  color: inherit;
  font: inherit;
}

.icon {
  display: block;
  flex: none;
  width: 16px;
  height: 16px;
  overflow: visible;
}

.caret {
  border: 4px solid transparent;
  border-top-color: #222;
  border-bottom: 0;
}

.caret.gray {
  border-top-color: #999;
}

.caret.big {
  border-width: 8px 5px 0;
  border-top-color: #000;
}

/* title bar and menu */
.titlebar {
  flex: none;
  display: flex;
  align-items: center;
  gap: 6px;
  height: 20px;
  padding-left: 1px;
  background: linear-gradient(100deg, #0a1a2c 0 25%, #14283c 40%, #0a1c30 55%, #16283c 65%, #0a1c2e 75%);
  border-bottom: 1px solid #000;
  color: #fff;
}

.titlebar .icon {
  width: 14px;
}

.window-buttons {
  display: flex;
  align-self: flex-start;
  margin-left: auto;
  margin-right: 3px;
  border: 1px solid #98a4b0;
  border-top: 0;
  border-radius: 0 0 4px 4px;
  overflow: hidden;
}

.window-buttons button {
  display: flex;
  justify-content: center;
  align-items: center;
  width: 26px;
  height: 15px;
  border-right: 1px solid #98a4b0;
  background: linear-gradient(#8c98a4 50%, #1c2c3c 50%, #44586c);
}

.window-buttons .close {
  width: 41px;
  border: 0;
  background: linear-gradient(#c88078 50%, #981c10 50%, #c84830);
}

.window-buttons svg {
  width: 14px;
  height: 10px;
}

.menu {
  flex: none;
  display: flex;
  align-items: center;
  gap: 12px;
  height: 21px;
  padding-left: 7px;
  background: linear-gradient(#fff, #e4e8f4 40%, #d0d8ec 50%, #dce2f4);
  border-bottom: 1px solid var(--line);
}

.menu a {
  color: #111;
  text-decoration: none;
}

/* toolbars */
.toolbars {
  flex: none;
  background: linear-gradient(#fff, var(--lavender) 12px);
  border-bottom: 1px solid var(--line);
}

.toolbar {
  display: flex;
  height: 30px;
  padding-top: 1px;
}

.toolbar.last {
  height: 31px;
}

.group {
  display: flex;
  align-items: center;
  position: relative;
  padding: 0 5px 0 10px;
  background: var(--face);
  border-right: 1px solid var(--line);
  border-bottom: 1px solid var(--line);
}

.group.tight {
  padding-left: 9px;
  padding-right: 4px;
}

.group.double {
  border-right: 3px double var(--line);
}

.group::before {
  content: "";
  position: absolute;
  left: 5px;
  top: 6px;
  bottom: 6px;
  border-left: 2px dotted #bbb;
}

.tb {
  display: flex;
  justify-content: center;
  align-items: center;
  width: 23px;
  height: 22px;
}

.drop {
  display: flex;
  justify-content: center;
  align-items: center;
  width: 15px;
  height: 22px;
}

.sep {
  align-self: stretch;
  width: 5px;
  margin: 5px 0 5px 3px;
  border-left: 1px solid #888;
}

.ribbon {
  display: flex;
  align-items: center;
  gap: 9px;
  padding: 0 10px 0 2px;
  background: var(--ribbon);
  border-right: 1px solid var(--line);
  border-bottom: 1px solid var(--line);
  font: 12px/16px var(--small);
}

.push {
  height: 21px;
  background: linear-gradient(#f6f6f6 50%, #dcdcdc 50%, #d0d0d0);
  border: 1px solid #707070;
  border-radius: 3px;
}

.push.all {
  width: 57px;
  font-size: 11px;
}

.push.only {
  width: 45px;
  font-size: 11px;
}

.push.square {
  display: flex;
  justify-content: center;
  align-items: center;
  width: 21px;
}

.combo {
  display: block;
  position: relative;
  background: #fff;
}

.combo::after {
  content: "";
  position: absolute;
  right: 6px;
  top: 9px;
  border: 4px solid transparent;
  border-top: 5px solid #000;
  border-bottom: 0;
  pointer-events: none;
}

.combo select,
.combo input {
  display: block;
  width: 100%;
  height: 100%;
  padding-left: 4px;
  appearance: none;
}

.combo.mode {
  width: 72px;
  height: 21px;
  background: linear-gradient(#f2f2f2 50%, #dcdcdc 50%, #d0d0d0);
  border: 1px solid #707070;
  border-radius: 2px;
}

.flat-set {
  display: flex;
}

.flat-set .tb {
  width: 21px;
  margin-right: 3px;
  height: 21px;
  background: var(--face);
  border-right: 1px solid #c4c4c4;
  border-bottom: 1px solid #c4c4c4;
}

.flat-set .tb:last-child {
  margin-right: 0;
}

.flat-set .drop {
  height: 21px;
  background: var(--face);
}

.coords {
  gap: 6px;
  padding: 0 9px 0 5px;
  width: 449px;
}

.coords .push {
  background: var(--face);
  border-color: #aaa;
}

.coords .combo.off + .push {
  margin-left: 6px;
}

.coords .combo {
  width: 72px;
  height: 21px;
  border: 1px solid #aaa;
}

.coords .combo::after {
  right: 4px;
  top: 8px;
  border-top-color: #aaa;
}

.coords .combo input {
  width: 51px;
  height: 15px;
  margin-top: 2px;
  padding-left: 3px;
  background: var(--face);
  font-size: 11px;
}

.coords .flat-set .drop {
  width: 12px;
}

.coords .flat-set + .push {
  margin-left: -1px;
  background: linear-gradient(#f6f6f6 50%, #dcdcdc 50%, #d0d0d0);
  border-color: #707070;
}

.info {
  flex: none;
  display: flex;
  align-items: center;
  gap: 22px;
  height: 31px;
  padding-left: 187px;
  border-bottom: 1px solid #777;
  font: 11px/16px var(--narrow);
}

/* workspace */
.workspace {
  flex: 1;
  display: flex;
  position: relative;
  min-height: 0;
  padding-bottom: 3px;
  background: #fff;
}

.strip {
  flex: none;
  display: flex;
  flex-direction: column;
  background: linear-gradient(var(--lavender), #dce2f8);
}

.strip.left {
  width: 44px;
  border-right: 1px solid var(--line);
}

.strip.right {
  width: 31px;
  margin-left: 1px;
  border-left: 1px solid #ccc;
  background: linear-gradient(90deg, #c8d0e8, #e0e4f8);
}

.strip-tools {
  display: flex;
  flex-wrap: wrap;
  align-content: flex-start;
  position: relative;
  padding: 13px 0 3px 2px;
  background: var(--face);
  border-bottom: 1px solid var(--line);
}

.strip-tools::before {
  content: "";
  position: absolute;
  left: 5px;
  right: 3px;
  top: 4px;
  border-top: 2px dotted #bbb;
}

.strip-tools.tall {
  height: 235px;
  border-right: 3px solid #d8e0f4;
}

.strip-tools .drop {
  width: 16px;
}

.strip-tools .sep {
  width: 100%;
  height: 5px;
  margin: 3px 5px 0 2px;
  border-left: 0;
  border-top: 1px solid #999;
}

/* operations manager */
.manager {
  flex: none;
  display: flex;
  flex-direction: column;
  width: 300px;
  padding: 1px 6px 5px 1px;
  background: var(--face);
  border-right: 2px solid #888;
}

.manager-head {
  display: flex;
  align-items: center;
  gap: 6px;
  height: 19px;
  padding: 0 5px 1px 4px;
  margin-right: -5px;
  background: #b4b4b4;
  font: 12px/16px var(--small);
}

.manager-head h2 {
  flex: 1;
  font-size: 11px;
}

.manager-head button {
  display: flex;
  justify-content: center;
  align-items: center;
  width: 15px;
  height: 15px;
  background: #eee;
  border: 1px solid #666;
  border-radius: 3px;
}

.cross {
  width: 9px;
  height: 9px;
}

.tabs {
  display: flex;
  align-items: flex-end;
  height: 20px;
  border-bottom: 1px solid var(--line);
  font-size: 11px;
}

.tab {
  width: 40px;
  height: 18px;
  padding-left: 4px;
  background: linear-gradient(#f4f4f4 50%, #e0e0e0 50%, #d4d4d4);
  border: 1px solid #999;
  border-bottom: 0;
  text-align: left;
}

.tab.active {
  width: 46px;
  height: 20px;
  background: #fff;
  border-color: #ddd;
}

.manager-tools {
  display: flex;
  align-items: center;
  height: 32px;
  margin: 2px 10px 0 2px;
  padding-left: 5px;
  border-top: 1px solid #aaa;
  border-bottom: 1px solid #aaa;
}

.manager-tools.plain {
  height: 31px;
  margin-top: 0;
  border: 0;
}

.manager-tools .sep {
  margin: 6px 0 6px 2px;
}

.manager-tools.plain .sep {
  width: 4px;
}

.g1 {
  font: bold 12px "Liberation Serif", serif;
  fill: #9c9c9c;
}

.tree-box {
  flex: 1;
  display: flex;
  flex-direction: column;
  margin: 5px 0 0 4px;
  min-height: 0;
  padding: 1px;
  background: #fff;
  border: 1px solid #828790;
}

.tree {
  flex: 1;
  overflow: hidden;
  padding-left: 2px;
  font: 11px/16px var(--narrow);
  white-space: nowrap;
}

.tree ul {
  margin-left: 19px;
}

.tree li {
  position: relative;
  list-style: none;
}

.tree li li::before {
  content: "";
  position: absolute;
  left: 9px;
  top: 0;
  bottom: 0;
  border-left: 1px dotted #777;
}

.tree li li:last-child::before {
  bottom: auto;
  height: 8px;
}

.row {
  display: flex;
  align-items: center;
  height: 16px;
}

.row .icon {
  height: 15px;
}

.row span {
  margin-left: 5px;
}

.row .selected {
  width: 163px;
  height: 16px;
  margin-left: 3px;
  background: #3399ff;
}

.branch {
  position: relative;
  width: 19px;
  height: 16px;
  padding: 4px 5px;
}

.branch::before {
  content: "";
  position: absolute;
  left: 10px;
  right: 0;
  top: 8px;
  border-top: 1px dotted #777;
}

.sign {
  display: block;
  position: relative;
  width: 9px;
  height: 9px;
  background: linear-gradient(#446, #446) center / 5px 1px no-repeat #fff;
  border: 1px solid #919191;
}

.sign.plus {
  background: linear-gradient(#446, #446) center / 5px 1px no-repeat, linear-gradient(#446, #446) center / 1px 5px no-repeat #fff;
}

.scroll {
  display: flex;
  height: 16px;
  background: #ececec;
  font-size: 10px;
}

.scroll button {
  width: 18px;
}

.track {
  flex: 1;
}

.thumb {
  width: 43%;
  height: 15px;
  background: linear-gradient(#f4f4f4 50%, #dcdcdc 50%, #d0d0d0);
  border: 1px solid #989898;
  border-radius: 1px;
  font: 8px/13px var(--small);
  text-align: center;
}

/* graphics view */
.viewport {
  flex: 1;
  min-width: 0;
  overflow: hidden;
  border-top: 1px solid #666;
}

.viewport svg {
  display: block;
  width: 100%;
  height: 100%;
}

.view-names,
.scale {
  font: bold 12px "Open Sans", sans-serif;
  fill: #c0c0c0;
}

.view-names {
  font-size: 11px;
}

.scale {
  fill: #00f020;
}

.scale.unit {
  font-weight: normal;
  fill: #d0d0d0;
}

.axis {
  font: bold 10px "Open Sans", sans-serif;
}

.note {
  position: absolute;
  left: 211px;
  background: #fff;
  font: 64px/64px var(--small);
}

.note.rajmund {
  top: 79px;
  width: 287px;
  height: 98px;
  padding: 3px 0 0 18px;
}

.note.moje {
  top: 361px;
  width: 244px;
  height: 109px;
  padding: 3px 0 0;
}

/* status bar */
.status {
  flex: none;
  display: flex;
  align-items: center;
  gap: 6px;
  height: 24px;
  padding-left: 2px;
  background: #f0eeee;
  border-top: 1px solid var(--line);
  overflow: hidden;
}

.status .hint {
  flex: 1;
}

.status > button {
  flex: none;
  height: 20px;
  border: 1px solid #b0b0b0;
  border-radius: 3px;
  font-size: 11px;
}

.status .b3d {
  width: 22px;
}

.status .bview {
  width: 36px;
}

.status .bplane {
  width: 63px;
}

.status .battr {
  width: 51px;
}

.status .bwcs {
  width: 40px;
}

.status .bmark {
  width: 11px;
}

.field {
  display: flex;
  align-items: center;
  font-size: 11px;
}

.field label {
  height: 20px;
  padding: 1px 3px 0 6px;
  border: 1px solid #b0b0b0;
  border-right: 0;
  border-radius: 3px 0 0 3px;
}

.status .combo {
  height: 22px;
  flex: none;
}

.combo.depth {
  width: 76px;
}

.combo.depth input {
  width: 56px;
  height: 18px;
  margin: 2px 0 0 1px;
  background: #ffff80;
}

.field.color {
  background: #fff;
  padding-right: 2px;
  gap: 4px;
}

.ten {
  width: 31px;
  height: 18px;
  background: #00ff00;
}

.combo.layer {
  width: 78px;
}

.combo.point {
  width: 36px;
}

.combo.stroke {
  width: 62px;
}

.combo.stroke::before {
  content: "";
  position: absolute;
  left: 2px;
  right: 19px;
  top: 10px;
  border-top: 1px solid #000;
}

.combo.stroke.thick::before {
  border-top-width: 3px;
}

/* taskbar */
.taskbar {
  flex: none;
  display: flex;
  align-items: center;
  height: 30px;
  padding-right: 13px;
  background: linear-gradient(#404444, #8c9090 2px, #5c6060 14px, #141618 15px, #1c2022);
  color: #fff;
}

.start {
  width: 42px;
  height: 42px;
  margin: -4px 11px 0 9px;
  align-self: flex-start;
  position: relative;
}

.start svg {
  display: block;
  width: 42px;
  height: 42px;
}

.dots {
  width: 9px;
  height: 22px;
  background: radial-gradient(circle, #888 1px, transparent 1px) 0 0 / 3px 3px;
}

.nero {
  display: flex;
  flex-direction: column;
  justify-content: center;
  align-items: center;
  width: 88px;
  height: 21px;
  margin: 0 2px 0 7px;
  background: #fff;
  color: #888;
  font: 9px/9px var(--small);
}

.nero b {
  font-size: 12px;
}

.dots.second {
  margin: 0 5px 0 20px;
}

.quick {
  display: flex;
}

.more {
  margin: 0 10px 6px 18px;
  font-size: 16px;
}

.task {
  display: flex;
  align-items: center;
  gap: 5px;
  width: 155px;
  height: 28px;
  margin-right: 4px;
  padding-left: 8px;
  background: linear-gradient(#6c7070, #4c5050 50%, #1c2022 50%, #2c3032);
  border: 1px solid #8c9090;
  border-radius: 3px;
  white-space: nowrap;
}

.dots + .task {
  margin-left: 8px;
}

.task.current {
  background: linear-gradient(#2c3032, #0c0e10);
  border-color: #606464;
}

.tray {
  display: flex;
  align-items: center;
  margin-left: auto;
}

.tray .tb {
  width: 18px;
}

.less {
  margin-right: 5px;
  font-weight: bold;
}

.tray-icons {
  display: flex;
  margin-right: 10px;
}

.tray-icons + .tray-icons {
  margin-right: 4px;
}

.tray time {
  font-size: 11px;
}
```
